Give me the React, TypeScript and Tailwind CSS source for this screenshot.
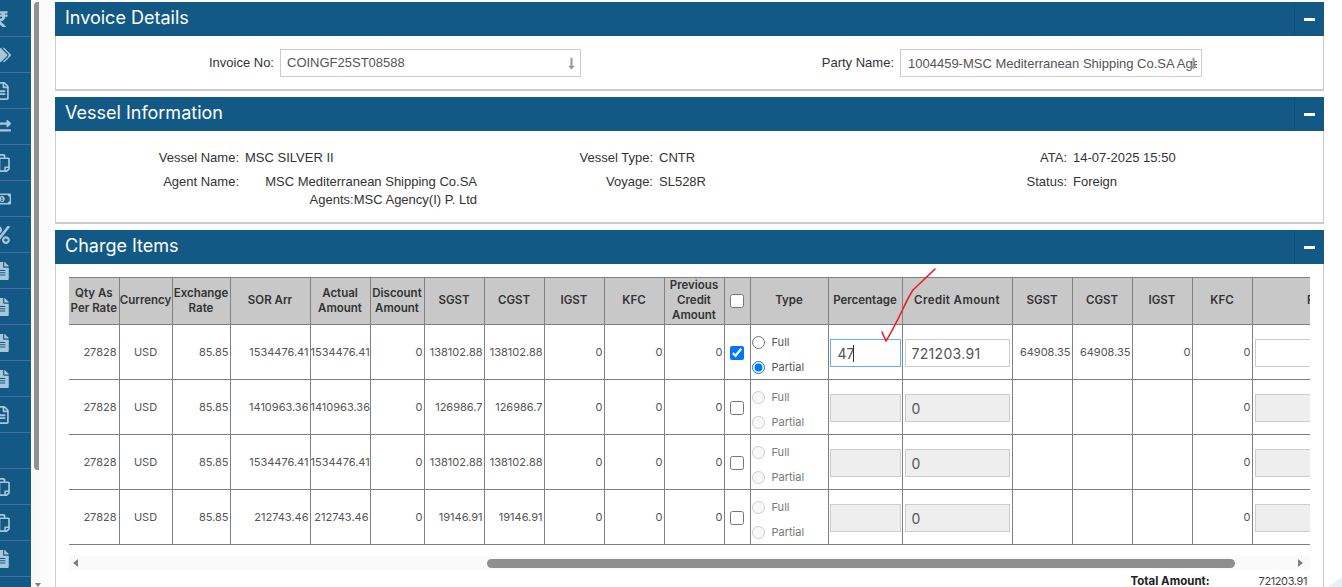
import React from "react";
import {
  FaRupeeSign,
  FaTags,
  FaRegFileAlt,
  FaExchangeAlt,
  FaRegCopy,
  FaRegMoneyBillAlt,
  FaPercent,
  FaFileAlt,
  FaLongArrowAltDown,
} from "react-icons/fa";

const CopyIcon = ({ size }: { size: number }) => <FaRegCopy size={size} className="shrink-0 -scale-y-100" />;

const sideIcons = [
  FaRupeeSign,
  FaTags,
  FaRegFileAlt,
  FaExchangeAlt,
  CopyIcon,
  FaRegMoneyBillAlt,
  FaPercent,
  FaFileAlt,
  FaFileAlt,
  FaFileAlt,
  FaFileAlt,
  FaRegFileAlt,
  null,
  CopyIcon,
  CopyIcon,
  FaFileAlt,
];

const colWidths = [50, 53, 58, 80, 60, 54, 60, 60, 60, 60, 60, 26, 78, 74, 110, 60, 60, 60, 60, 158];

const headers = [
  "Qty As Per Rate",
  "Currency",
  "Exchange Rate",
  "SOR Arr",
  "Actual Amount",
  "Discount Amount",
  "SGST",
  "CGST",
  "IGST",
  "KFC",
  "Previous Credit Amount",
];

const rows = [
  { sor: "1534476.41", sgst: "138102.88", active: true },
  { sor: "1410963.36", sgst: "126986.7", active: false },
  { sor: "1534476.41", sgst: "138102.88", active: false },
  { sor: "212743.46", sgst: "19146.91", active: false },
];

const Panel = ({ title, children }: { title: string; children: React.ReactNode }) => (
  <section className="border-x border-b-2 border-[#cccccc] bg-white">
    <div className="-mx-px flex h-[34px] items-center justify-between bg-[#125a85] pl-[10px]">
      <h2 className="pb-[3px] text-[18px] leading-none text-white">{title}</h2>
      <div className="flex h-full w-[30px] items-center justify-center border-l border-[#0f5078]">
        <span className="h-[3px] w-[11px] bg-white" />
      </div>
    </div>
    {children}
  </section>
);

const App = () => {
  return (
    <div className="relative flex h-[587px] w-[1342px] overflow-hidden bg-white font-['Inter',sans-serif]">
      {/* Sidebar */}
      <aside className="w-[31px] shrink-0 bg-[#125a85] pt-px">
        {sideIcons.map((Icon, i) => (
          <div key={i} className="flex h-9 items-center justify-end border-b border-[#4a6ea3] pr-[20px] text-[#a9c6d9] [&>svg]:shrink-0">
            {Icon && <Icon size={18} />}
          </div>
        ))}
      </aside>

      {/* Page scrollbar */}
      <div className="flex w-[24px] shrink-0 flex-col bg-gradient-to-r from-[#f7f7f7] to-white pl-[3px] pt-[2px]">
        <div className="h-[468px] w-[5px] rounded-tl-[4px] rounded-bl-[4px] bg-[#909090]" />
        <div className="mt-[113px] ml-[1px] h-0 w-0 border-x-[3px] border-t-[4px] border-x-transparent border-t-[#808080]" />
      </div>

      <main className="flex w-[1269px] shrink-0 flex-col gap-[6px] pt-[2px]">
        <Panel title="Invoice Details">
          <div className="flex h-[53px] items-start pt-[13px] font-['Liberation_Sans',sans-serif] text-[13px]">
            <div className="flex w-[525px] items-center justify-end gap-[6px]">
              <label className="text-[#333333]">Invoice No:</label>
              <div className="flex h-[28px] w-[301px] items-center justify-between border border-[#cccccc] pl-[6px] pr-[2px] text-[#555555]">
                <span>COINGF25ST08588</span>
                <FaLongArrowAltDown size={13} className="text-[#999999]" />
              </div>
            </div>
            <div className="flex w-[621px] items-center justify-end gap-[6px]">
              <label className="text-[#333333]">Party Name:</label>
              <div className="relative flex h-[28px] w-[302px] items-center border border-[#cccccc] pl-[7px] pr-[4px] pt-px text-[#555555]">
                <span className="overflow-hidden whitespace-nowrap">1004459-MSC Mediterranean Shipping Co.SA Agents</span>
                <FaLongArrowAltDown size={13} className="absolute right-[1px] top-[7px] text-[#999999]" />
              </div>
            </div>
          </div>
        </Panel>

        <Panel title="Vessel Information">
          <div className="grid h-[91px] grid-cols-[183px_238px_176px_244px_170px_1fr] content-start gap-y-[6px] pt-[18px] font-['Liberation_Sans',sans-serif] text-[13px] leading-[18px] text-[#333333]">
            <div className="text-right">Vessel Name:</div>
            <div className="pl-[6px]">MSC SILVER II</div>
            <div className="text-right">Vessel Type:</div>
            <div className="pl-[6px]">CNTR</div>
            <div className="text-right">ATA:</div>
            <div className="pl-[6px]">14-07-2025 15:50</div>
            <div className="text-right">Agent Name:</div>
            <div className="pl-[6px] text-right">
              MSC Mediterranean Shipping Co.SA
              <br />
              Agents:MSC Agency(I) P. Ltd
            </div>
            <div className="text-right">Voyage:</div>
            <div className="pl-[6px]">SL528R</div>
            <div className="text-right">Status:</div>
            <div className="pl-[6px]">Foreign</div>
          </div>
        </Panel>

        <Panel title="Charge Items">
          <div className="h-[400px] pl-[13px] pt-[13px]">
            <div className="w-[1241px] overflow-hidden">
              <table className="w-[1341px] table-fixed border-collapse text-[11px] text-[#555555]">
                <colgroup>
                  {colWidths.map((w, i) => (
                    <col key={i} style={{ width: w }} />
                  ))}
                </colgroup>
                <thead>
                  <tr className="h-[47px] bg-[#c8c8c8] text-center text-[11.5px] leading-[15px] text-[#333333]">
                    {headers.map((h) => (
                      <th key={h} className="border-y border-r border-[#808080] pb-[1px] font-semibold">
                        {h}
                      </th>
                    ))}
                    <th className="border border-[#808080]">
                      <input type="checkbox" readOnly className="h-[14px] w-[14px] align-middle" />
                    </th>
                    <th className="border border-[#808080] pb-[1px] font-semibold">Type</th>
                    <th className="border border-[#808080] pb-[1px] font-semibold">Percentage</th>
                    <th className="border border-[#808080] pb-[1px] font-semibold tracking-[0.4px]">Credit Amount</th>
                    <th className="border border-[#808080] pb-[1px] font-semibold">SGST</th>
                    <th className="border border-[#808080] pb-[1px] font-semibold">CGST</th>
                    <th className="border border-[#808080] pb-[1px] font-semibold">IGST</th>
                    <th className="border border-[#808080] pb-[1px] font-semibold">KFC</th>
                    <th className="border-y border-l border-[#808080] pb-[1px] font-semibold">Remarks</th>
                  </tr>
                </thead>
                <tbody>
                  {rows.map((r, i) => (
                    <tr key={i} className="h-[55px] text-right">
                      <td className="border-b border-r border-[#808080] pr-[2px]">27828</td>
                      <td className="border border-[#808080] text-center">USD</td>
                      <td className="border border-[#808080] pr-px">85.85</td>
                      <td className="border border-[#808080] pr-px">{r.sor}</td>
                      <td className="border border-[#808080] pr-px">{r.sor}</td>
                      <td className="border border-[#808080] pr-px">0</td>
                      <td className="border border-[#808080] pr-px">{r.sgst}</td>
                      <td className="border border-[#808080] pr-px">{r.sgst}</td>
                      <td className="border border-[#808080] pr-px">0</td>
                      <td className="border border-[#808080] pr-px">0</td>
                      <td className="border border-[#808080] pr-px">0</td>
                      <td className="border border-[#808080] text-center">
                        <input
                          type="checkbox"
                          readOnly
                          checked={r.active}
                          className="h-[14px] w-[14px] align-middle"
                        />
                      </td>
                      <td className={`border border-[#808080] text-left leading-[17px] ${r.active ? "" : "text-[#777777]"}`}>
                        <div className="flex flex-col gap-[8px] pl-[1px] pt-[6px]">
                          <label className="flex items-center gap-[7px]">
                            <input
                              type="radio"
                              name={`type-${i}`}
                              disabled={!r.active}
                              className="m-0 h-[13px] w-[13px]"
                            />
                            Full
                          </label>
                          <label className="flex items-center gap-[7px]">
                            <input
                              type="radio"
                              name={`type-${i}`}
                              disabled={!r.active}
                              defaultChecked={r.active}
                              className="m-0 h-[13px] w-[13px]"
                            />
                            Partial
                          </label>
                        </div>
                      </td>
                      <td className="border border-[#808080] px-px pt-[2px]">
                        {r.active ? (
                          <div className="flex h-[28px] items-center border border-[#66afe9] pl-[7px] text-[14px] text-[#555555]">
                            47<span className="ml-[-1px] h-[17px] w-px bg-[#333333]" />
                          </div>
                        ) : (
                          <div className="h-[28px] border border-[#cccccc] bg-[#eeeeee]" />
                        )}
                      </td>
                      <td className="border border-[#808080] pl-[2px] pr-[2px] pt-[2px]">
                        <div
                          className={`flex h-[28px] items-center border border-[#cccccc] pl-[6px] text-[14px] tracking-[0.3px] text-[#555555] ${
                            r.active ? "" : "bg-[#eeeeee]"
                          }`}
                        >
                          {r.active ? "721203.91" : "0"}
                        </div>
                      </td>
                      <td className="border border-[#808080] pr-px">{r.active ? "64908.35" : ""}</td>
                      <td className="border border-[#808080] pr-px">{r.active ? "64908.35" : ""}</td>
                      <td className="border border-[#808080] pr-px">{r.active ? "0" : ""}</td>
                      <td className="border border-[#808080] pr-px">0</td>
                      <td className="border-b border-l border-[#808080] pl-[2px] pr-[2px] pt-[2px]">
                        <div className={`h-[28px] border border-[#cccccc] ${r.active ? "" : "bg-[#eeeeee]"}`} />
                      </td>
                    </tr>
                  ))}
                </tbody>
              </table>
            </div>

            {/* Horizontal scrollbar */}
            <div className="mt-[11px] flex h-[14px] w-[1241px] items-center bg-[#fafafa] pl-[4px]">
              <span className="h-0 w-0 border-y-[4px] border-r-[5px] border-y-transparent border-r-[#808080]" />
              <span className="ml-[409px] h-[9px] w-[748px] rounded-full bg-[#8e8e8e]" />
              <span className="ml-[63px] h-0 w-0 border-y-[4px] border-l-[5px] border-y-transparent border-l-[#808080]" />
            </div>

            <div className="mt-[4px] flex w-[1241px] justify-end gap-[49px] pr-[3px] text-[11.5px] leading-[14px]">
              <span className="font-bold text-[#222222]">Total Amount:</span>
              <span className="text-[11px] tracking-[-0.4px] text-[#444444]">721203.91</span>
            </div>
          </div>
        </Panel>
      </main>

      {/* Hand-drawn red tick over the table */}
      <svg className="pointer-events-none absolute left-[875px] top-[262px]" width="70" height="90" viewBox="0 0 70 90" fill="none">
        <path
          d="M60 7 C52 15 44 22 38 28 C31 38 24 58 11 79 L7 70"
          stroke="#ee1c25"
          strokeWidth="1.6"
          strokeLinecap="round"
          strokeLinejoin="round"
        />
      </svg>

      <svg className="absolute bottom-0 right-0" width="14" height="10" viewBox="0 0 14 10">
        <polygon points="14,0 14,10 0,10" fill="#e3f1f9" />
      </svg>
    </div>
  );
};

export default App;
